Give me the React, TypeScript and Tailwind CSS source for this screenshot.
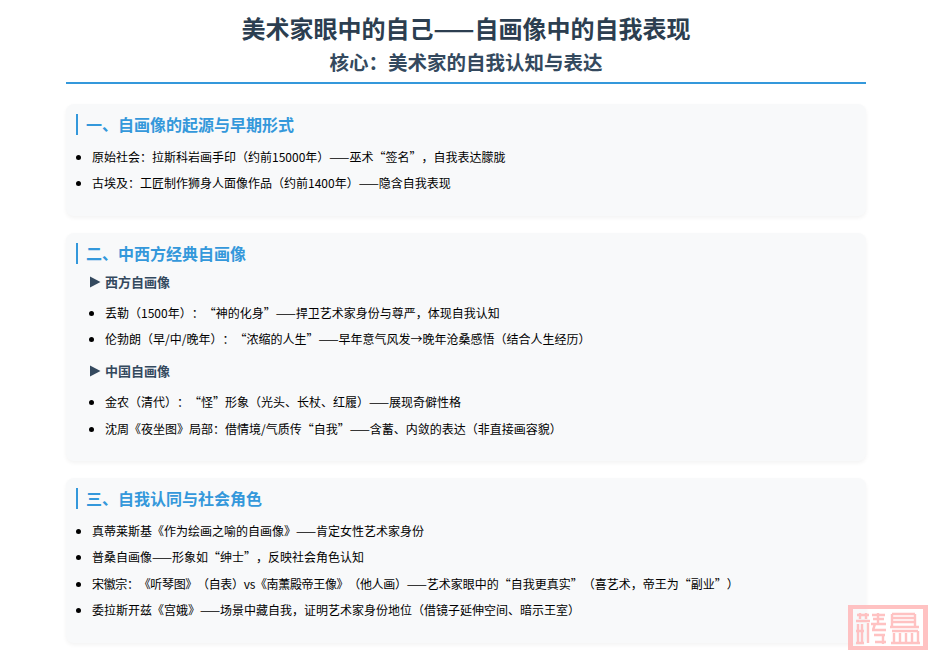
import React from 'react';

const FONT = { fontFamily: '"Noto Sans CJK SC", sans-serif' };

function Bullets({ items, className = '' }: { items: React.ReactNode[]; className?: string }) {
  return (
    <ul className={`list-disc ${className}`}>
      {items.map((t, i) => (
        <li key={i} className="text-[12px] leading-[18px] mb-[8.4px] text-black">
          {t}
        </li>
      ))}
    </ul>
  );
}

function Card({ title, children }: { title: string; children: React.ReactNode }) {
  return (
    <section className="bg-[#f8f9fa] rounded-lg shadow-[0_2px_4px_rgba(0,0,0,0.05)] px-[10px] pt-[10px] pb-[15px] mb-[17px]">
      <h2 className="border-l-2 border-[#3498db] pl-2 text-[16px] leading-[21px] font-bold text-[#3498db] mb-[9px]">
        {title}
      </h2>
      {children}
    </section>
  );
}

function SubTitle({ children, className = '' }: { children: React.ReactNode; className?: string }) {
  return (
    <h3 className={`pl-[14px] text-[13px] leading-[18px] font-bold text-[#34495e] flex items-center gap-[3px] mb-[13px] ${className}`}>
      <svg width="12" height="12" viewBox="0 0 12 12" className="shrink-0">
        <path d="M0 0.5 L10.5 6 L0 11.5 Z" fill="#34495e" />
      </svg>
      {children}
    </h3>
  );
}

function Seal() {
  return (
    <svg
      width="80"
      height="45"
      viewBox="0 0 80 45"
      className="absolute left-[848px] top-[605px]"
      fill="none"
    >
      <g opacity="0.9">
        <path fillRule="evenodd" fill="#ffbcbc" d="M0 0H80V45H0Z M5 4V41H75V4Z" />
        <g stroke="#ffbcbc" strokeWidth="2.4">
          <path d="M9 10H21M12 8V14M18 8V14M8 16H22M10 19V39M14 19V39M8 26H16M20 18V38M8 38H16" />
          <path d="M24 10H37M30 8V19M25 14H36M23 19H38M27 19L25 25M24 25H38M26 30H37M35 30V39M27 37H38" />
          <path d="M44 9H67M44 13H67M44 17H67M44 9V21M67 9V21M42 22H71M44 26H70M46 28V37M52 28V37M58 28V37M64 28V37M70 26V37M43 38H72" />
        </g>
      </g>
    </svg>
  );
}

export default function App() {
  return (
    <div className="relative h-[655px] overflow-hidden bg-white [text-spacing-trim:space-all]" style={FONT}>
      <div className="w-[800px] ml-[66px]">
        <header className="border-b-2 border-[#3498db] pt-[10px] pb-[6px] mb-[20px] text-center">
          <h1 className="text-[24px] leading-[36px] font-bold text-[#2c3e50]">
            美术家眼中的自己——自画像中的自我表现
          </h1>
          <p className="mt-[2px] text-[19.5px] leading-[28px] font-bold text-[#34495e]">
            核心：美术家的自我认知与表达
          </p>
        </header>

        <Card title="一、自画像的起源与早期形式">
          <Bullets
            className="pl-[16px] mt-[13px]"
            items={[
              '原始社会：拉斯科岩画手印（约前15000年）——巫术“签名”，自我表达朦胧',
              '古埃及：工匠制作狮身人面像作品（约前1400年）——隐含自我表现',
            ]}
          />
        </Card>

        <Card title="二、中西方经典自画像">
          <SubTitle>西方自画像</SubTitle>
          <Bullets
            className="pl-[29px]"
            items={[
              '丢勒（1500年）：“神的化身”——捍卫艺术家身份与尊严，体现自我认知',
              '伦勃朗（早/中/晚年）：“浓缩的人生”——早年意气风发→晚年沧桑感悟（结合人生经历）',
            ]}
          />
          <SubTitle className="mt-[14px]">中国自画像</SubTitle>
          <Bullets
            className="pl-[29px]"
            items={[
              '金农（清代）：“怪”形象（光头、长杖、红履）——展现奇僻性格',
              '沈周《夜坐图》局部：借情境/气质传“自我”——含蓄、内敛的表达（非直接画容貌）',
            ]}
          />
        </Card>

        <Card title="三、自我认同与社会角色">
          <Bullets
            className="pl-[16px] mt-[13px]"
            items={[
              '真蒂莱斯基《作为绘画之喻的自画像》——肯定女性艺术家身份',
              '普桑自画像——形象如“绅士”，反映社会角色认知',
              <>
                <span className="tracking-[-0.33px]">宋徽宗：《听琴图》（自表）vs《南薰殿帝王像》（他人画）</span>
                ——艺术家眼中的“自我更真实”（喜艺术，帝王为“副业”）
              </>,
              '委拉斯开兹《宫娥》——场景中藏自我，证明艺术家身份地位（借镜子延伸空间、暗示王室）',
            ]}
          />
        </Card>
      </div>
      <Seal />
    </div>
  );
}
